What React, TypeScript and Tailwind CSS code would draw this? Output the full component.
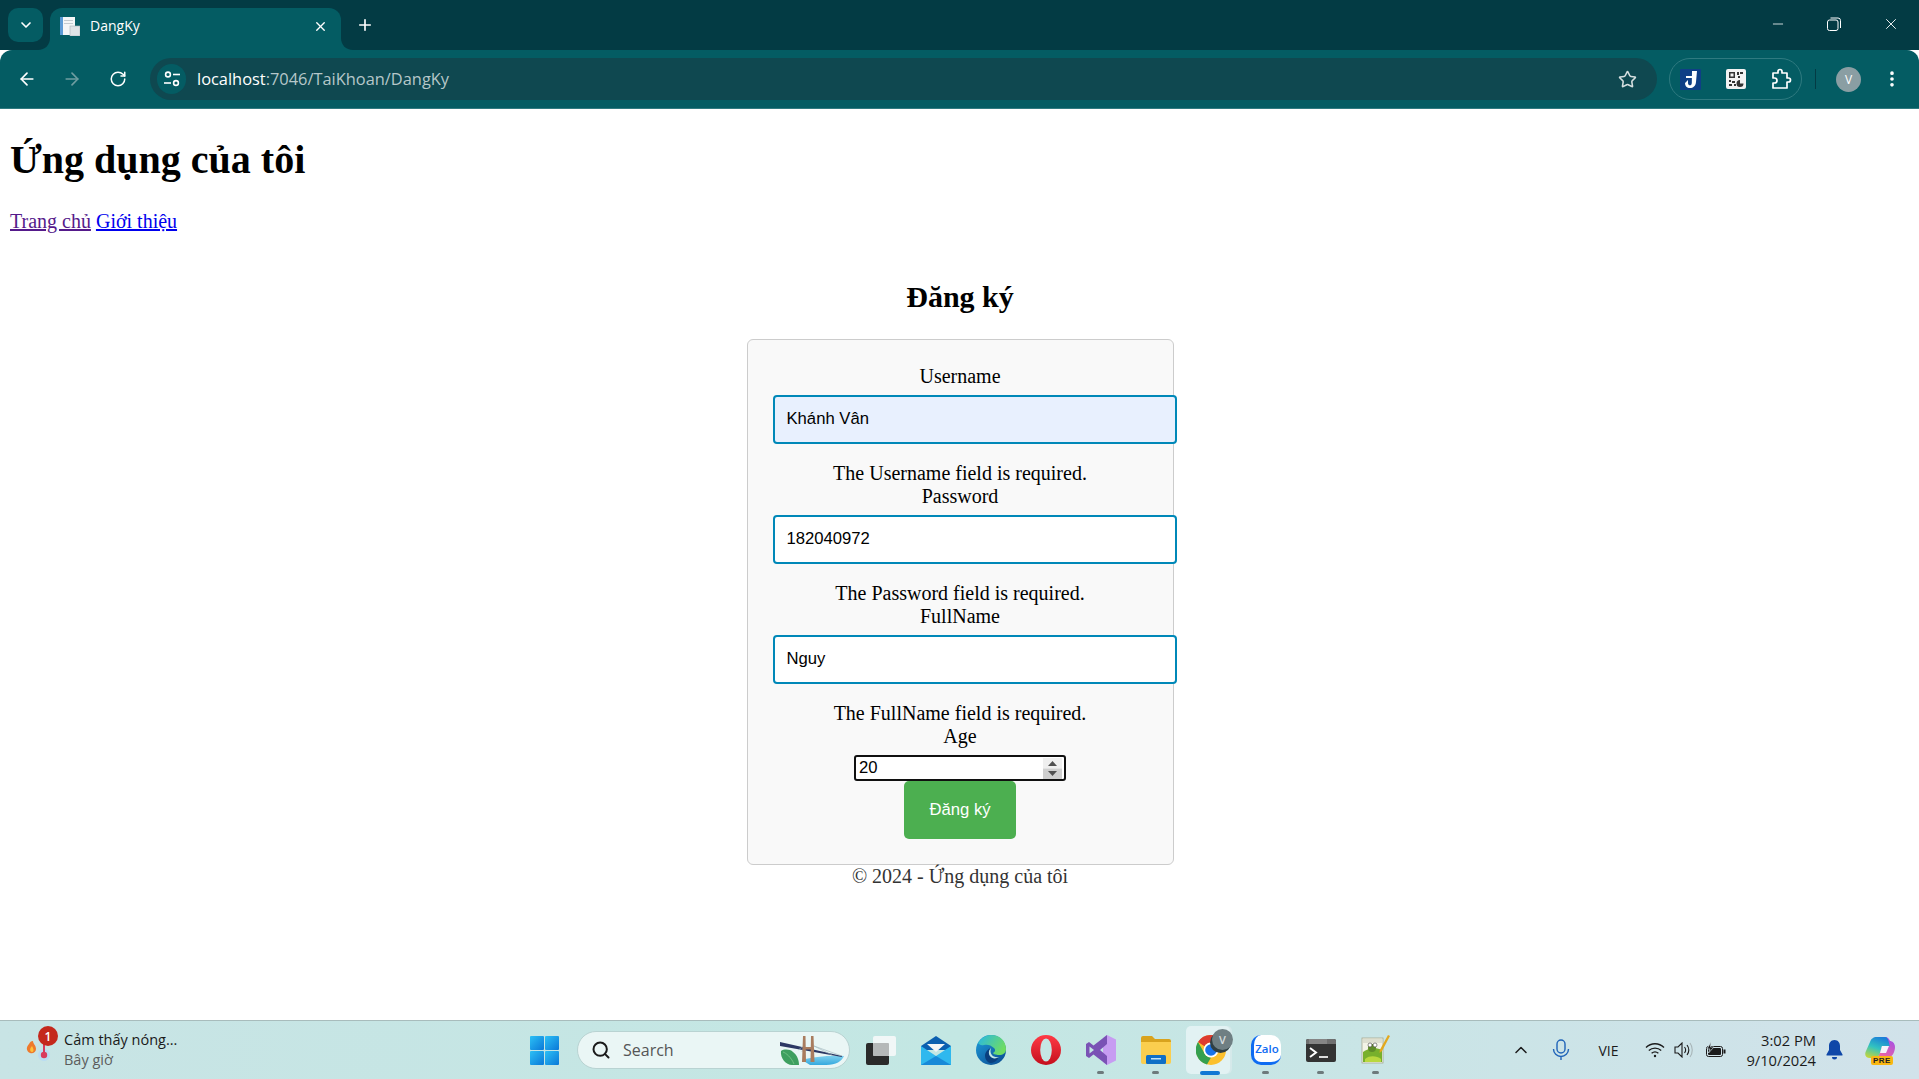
import { ArrowLeft, ArrowRight, ChevronDown, ChevronUp, EllipsisVertical, Minus, Plus, RotateCw, Search, Star, X } from 'lucide-react'

const uiFont = 'font-["Open_Sans","Noto_Sans",sans-serif]'

const SiteInfoIcon = () => (
  <svg width="20" height="20" viewBox="0 0 20 20" fill="none" stroke="#fff" strokeWidth="1.6">
    <circle cx="6" cy="5.5" r="2.4" />
    <path d="M11 5.5h7" />
    <circle cx="14" cy="14" r="2.4" />
    <path d="M2 14h7" />
  </svg>
)

const Favicon = () => (
  <svg width="20" height="19" viewBox="0 0 20 19">
    <rect x="0" y="0" width="15" height="18" fill="#f4f6f7" />
    <rect x="0" y="0" width="3" height="18" fill="#5b9bd5" />
    <rect x="4" y="3" width="9" height="1" fill="#c4cbd0" />
    <rect x="4" y="6" width="9" height="1" fill="#c4cbd0" />
    <rect x="10" y="9" width="10" height="10" fill="#dfe3e6" stroke="#aab3b8" strokeWidth="0.6" />
  </svg>
)

const JIcon = () => (
  <svg width="21" height="21" viewBox="0 0 21 21">
    <rect width="21" height="21" rx="1" fill="#0f3f86" />
    <path d="M12 2h5l-1 11c-.3 4-3 6-6 6-3 0-5-2-5-5l3-3v3c0 1.5 1 2.300 2 2.300s1.700-.8 1.800-2.300z" fill="#fff" />
    <path d="M6 7h6v2H6z" fill="#fff" />
  </svg>
)

const QrIcon = () => (
  <svg width="20" height="20" viewBox="0 0 20 20">
    <rect width="20" height="20" rx="2" fill="#f2f2f2" />
    <path d="M3 3h6v6H3zM4.500 4.500v3h3v-3z" fill="#333" fillRule="evenodd" />
    <path d="M11 3h2v3h-2zM14 3h3v2h-3zM12 7h2v2h-2zM3 11h2v2H3zM6 12h3v2H6zM3 15h3v2H3zM8 15h2v2H8z" fill="#333" />
    <path d="M14 11a3.500 3.500 0 1 0 3.500 3.500H14z" fill="#333" />
  </svg>
)

const PuzzleIcon = () => (
  <svg width="22" height="22" viewBox="0 0 22 22" fill="none" stroke="#fff" strokeWidth="1.700" strokeLinejoin="round">
    <path d="M3 5h5V3.500a2 2 0 0 1 4 0V5h5v5h1.500a2 2 0 0 1 0 4H17v6H3v-5h1.500a2.500 2.500 0 0 0 0-5H3z" />
  </svg>
)

const RestoreIcon = () => (
  <svg width="14" height="14" viewBox="0 0 14 14" fill="none" stroke="#fff" strokeWidth="1">
    <rect x="0.500" y="3" width="10.500" height="10.500" rx="2" />
    <path d="M3.500 1h7.500a2.500 2.500 0 0 1 2.500 2.500V11" />
  </svg>
)

const TabFlare: React.FC<{ side: 'left' | 'right' }> = ({ side }) => (
  <svg
    width="12"
    height="12"
    viewBox="0 0 12 12"
    className={`absolute bottom-0 ${side === 'left' ? '-left-[12px]' : '-right-[12px]'}`}
  >
    <path d={side === 'left' ? 'M12 0v12H0C7 12 12 7 12 0z' : 'M0 0v12h12C5 12 0 7 0 0z'} fill="#045c63" />
  </svg>
)

const WinLogo = () => (
  <svg width="29" height="29" viewBox="0 0 29 29">
    <defs>
      <linearGradient id="winA" x1="0" y1="0" x2="1" y2="1">
        <stop offset="0" stopColor="#2cc0f5" />
        <stop offset="1" stopColor="#0a78d8" />
      </linearGradient>
    </defs>
    <rect x="0" y="0" width="14" height="14" rx="1" fill="url(#winA)" />
    <rect x="15" y="0" width="14" height="14" rx="1" fill="url(#winA)" />
    <rect x="0" y="15" width="14" height="14" rx="1" fill="url(#winA)" />
    <rect x="15" y="15" width="14" height="14" rx="1" fill="url(#winA)" />
  </svg>
)

const BridgeArt = () => (
  <svg width="64" height="32" viewBox="0 0 64 32">
    <defs>
      <linearGradient id="waterA" x1="0" y1="0" x2="0" y2="1">
        <stop offset="0" stopColor="#7fd0ee" />
        <stop offset="1" stopColor="#35a9de" />
      </linearGradient>
    </defs>
    <path d="M22 26c10-3 28-5 42-4-2 5-8 9-18 9H30z" fill="url(#waterA)" />
    <path d="M0 8l62 14v1L0 12z" fill="#2c3763" />
    <path d="M34 12l28 10M34 12l18 9M24 12l-6 4M24 12l-2 6" stroke="#9db3bb" strokeWidth="0.600" fill="none" />
    <path d="M23 2h2.500l.5 26h-4zM31 2h2.500l1 26h-4z" fill="#a97c5e" />
    <path d="M23 13h10v2.500H23z" fill="#a97c5e" />
    <path d="M1 17c3-2 9-2 12 1 4 3 6 8 6 13h-7C6 31 0 24 1 17z" fill="#3f9f60" />
    <path d="M3 18c3 1 8 5 11 12" stroke="#7cc98c" strokeWidth="0.800" fill="none" />
  </svg>
)

const TaskView = () => (
  <svg width="30" height="29" viewBox="0 0 30 29">
    <rect x="0" y="7" width="23" height="22" rx="2" fill="#2a2a2a" />
    <rect x="7" y="0" width="23" height="20" rx="2" fill="#f6f8f8" fillOpacity="0.9" />
    <rect x="7" y="7" width="16" height="13" rx="1" fill="#b5b8b8" />
  </svg>
)

const MailIcon = () => (
  <svg width="30" height="29" viewBox="0 0 30 29">
    <path d="M0 10L15 0l15 10v4H0z" fill="#0b5fb0" />
    <path d="M6 8h18l-9 8z" fill="#f3f5f7" />
    <path d="M0 10l15 10 15-10v19H0z" fill="#2fb8ee" />
    <path d="M0 29l15-9 15 9z" fill="#1789d8" />
  </svg>
)

const EdgeIcon = () => (
  <svg width="30" height="30" viewBox="0 0 30 30">
    <defs>
      <linearGradient id="edgeA" x1="0" y1="0" x2="0.800" y2="1">
        <stop offset="0" stopColor="#1f9fdc" />
        <stop offset="1" stopColor="#0b4f96" />
      </linearGradient>
      <linearGradient id="edgeB" x1="0" y1="0" x2="1" y2="0.500">
        <stop offset="0" stopColor="#27b7e6" />
        <stop offset="1" stopColor="#6fdc63" />
      </linearGradient>
    </defs>
    <circle cx="15" cy="15" r="15" fill="url(#edgeA)" />
    <path d="M2 8C5 3 10 0 15 0c9 0 15 6 15 14 0 4-3 6-7 6-3 0-6-1-6-2 2-1 3-3 1-5-3-3-7-4-10-3-3 .5-4 0-6-2z" fill="url(#edgeB)" />
    <path d="M23 22c-3 2-7 2-9-1-2-3-1-6 1-8-3 1-6 4-6 8 0 3 2 6 5 7 4 0 7-2 9-6z" fill="#0a3f7e" />
    <path d="M15 13c-2 2-3 5-1 8 2 3 6 3 9 1-6 1-10-3-8-9z" fill="#c5e6e4" />
  </svg>
)

const OperaIcon = () => (
  <svg width="30" height="30" viewBox="0 0 30 30">
    <defs>
      <linearGradient id="operaA" x1="0" y1="0" x2="0" y2="1">
        <stop offset="0" stopColor="#ff3a45" />
        <stop offset="1" stopColor="#c40e1d" />
      </linearGradient>
    </defs>
    <circle cx="15" cy="15" r="15" fill="url(#operaA)" />
    <ellipse cx="15" cy="15" rx="5.800" ry="11.500" fill="#c5e6e4" />
  </svg>
)

const VsIcon = () => (
  <svg width="30" height="30" viewBox="0 0 30 30">
    <path d="M21 0l9 4.500v21L21 30l-4-3V3z" fill="#c79cf2" />
    <path d="M21 0v9l-7 6 7 6v9L7.500 19.500 3 23l-3-2V9l3-2 4.500 3.500z" fill="#7a52b5" />
    <path d="M3.500 11.500L8 15l-4.500 3.500z" fill="#c5e6e4" />
  </svg>
)

const FolderIcon = () => (
  <svg width="30" height="28" viewBox="0 0 30 28">
    <path d="M0 2a2 2 0 0 1 2-2h9l3 3h14a2 2 0 0 1 2 2v4H0z" fill="#d9a31d" />
    <path d="M0 6h30v20a2 2 0 0 1-2 2H2a2 2 0 0 1-2-2z" fill="#fbce4e" />
    <rect x="5" y="19" width="20" height="9" rx="1.500" fill="#0f6fc6" />
    <rect x="10" y="22" width="10" height="1.500" fill="#bfe2f7" />
  </svg>
)

const ChromeIcon = () => (
  <svg width="30" height="30" viewBox="0 0 30 30">
    <circle cx="15" cy="15" r="15" fill="#fbc02d" />
    <path d="M15 0a15 15 0 0 1 13 7.500H15a7.500 7.500 0 0 0-6.500 3.750L2 7A15 15 0 0 1 15 0z" fill="#dd3b2f" />
    <path d="M2 7l6.500 11.250A7.500 7.500 0 0 0 15 22.500L11 29.500A15 15 0 0 1 2 7z" fill="#34a04f" />
    <circle cx="15" cy="15" r="7.500" fill="#fff" />
    <circle cx="15" cy="15" r="5.800" fill="#1a73e8" />
  </svg>
)

const ZaloIcon = () => (
  <div className="relative flex h-[30px] w-[30px] items-center justify-center rounded-[10px] border-b-[3px] border-l-[3px] border-[#0f6cf2] bg-white">
    <span className={`text-[11.500px] leading-none font-semibold text-[#0f6cf2] ${uiFont}`}>Zalo</span>
  </div>
)

const TerminalIcon = () => (
  <svg width="30" height="23" viewBox="0 0 30 23">
    <rect width="30" height="23" rx="2" fill="#333333" />
    <path d="M0 2a2 2 0 0 1 2-2h26a2 2 0 0 1 2 2v3H0z" fill="#6f6f6f" />
    <rect x="3" y="0" width="18" height="5" fill="#858585" />
    <path d="M4 9l6 4.500-6 4.500" fill="none" stroke="#fff" strokeWidth="2" />
    <path d="M13 18h9" stroke="#dcdcdc" strokeWidth="2" />
  </svg>
)

const NotepadIcon = () => (
  <svg width="30" height="30" viewBox="0 0 30 30">
    <rect x="1" y="3" width="21" height="25" fill="#f2f3e6" stroke="#a5a88f" strokeWidth="0.800" />
    <path d="M2 7h19M2 5h19" stroke="#9ea28c" strokeWidth="0.500" />
    <path d="M2 17c5-4 13-5 19-2v12H2z" fill="#78b02c" />
    <path d="M4 24c5-4 12-3 16 0v3H4z" fill="#b9d83e" />
    <circle cx="11" cy="13" r="4" fill="#5e8c28" />
    <circle cx="9" cy="10" r="2" fill="#fff" stroke="#444" strokeWidth="0.600" />
    <circle cx="14" cy="10" r="2" fill="#fff" stroke="#444" strokeWidth="0.600" />
    <path d="M27 0l2 1-8 15-2.500 2 .3-3z" fill="#e3a81e" />
  </svg>
)

const CopilotIcon = () => (
  <div className="relative h-[29px] w-[30px]">
    <svg width="30" height="23" viewBox="0 0 30 23">
      <defs>
        <linearGradient id="copA" x1="0.600" y1="0" x2="0.200" y2="1">
          <stop offset="0" stopColor="#1a7fd8" />
          <stop offset="0.500" stopColor="#32c3c0" />
          <stop offset="1" stopColor="#c4d63a" />
        </linearGradient>
        <linearGradient id="copB" x1="0.700" y1="0" x2="0.200" y2="1">
          <stop offset="0" stopColor="#a24fe8" />
          <stop offset="1" stopColor="#f5689a" />
        </linearGradient>
      </defs>
      <path d="M20 1c3 0 4 2 5 4 2 0 5 2 5 6 0 5-3 11-8 11H11c2-1 3-3 4-6l3-9c.5-2 1-4 2-6z" fill="url(#copB)" />
      <path d="M20 1H12C8 1 6 3 5 6l-4 9c-2 4 0 7 4 7h5c2 0 4-2 5-5l2-7h8c-1-1-1-9-5-9z" fill="url(#copA)" />
      <path d="M17 10h7l-3 7h-6z" fill="#f4f4fa" />
    </svg>
    <div className="absolute bottom-0 left-[6px] rounded-[2px] bg-[#f9b712] px-[2px] font-['Liberation_Sans',sans-serif] text-[8px] leading-[9px] font-bold tracking-[0.5px] text-[#222]">
      PRE
    </div>
  </div>
)

const WeatherIcon = () => (
  <svg width="24" height="38" viewBox="0 0 24 38">
    <path d="M3 13c-3 3-3 7 1 9 3 1 6-1 6-4 0-4-3-5-3-8-2 0-3 1-4 3z" fill="#ee7a2c" />
    <path d="M4.500 17c-1 2 0 4 1.500 4s2-2 1-4l-1-2z" fill="#ffc13a" />
    <circle cx="18" cy="24" r="6" fill="#b9dcf3" />
    <path d="M18 6v16" stroke="#d93a5e" strokeWidth="2" />
    <circle cx="18" cy="24" r="3.200" fill="#d93a5e" />
  </svg>
)

const MicIcon = () => (
  <svg width="18" height="22" viewBox="0 0 18 22" fill="none" stroke="#1f63b8" strokeWidth="1.400">
    <rect x="5" y="1" width="8" height="13" rx="4" />
    <path d="M1.500 10a7.500 7.500 0 0 0 15 0M9 17.500V21" />
  </svg>
)

const WifiIcon = () => (
  <svg width="20" height="16" viewBox="0 0 20 16" fill="none" stroke="#1b1b1b" strokeWidth="1.300">
    <path d="M1 5.500c5-5 13-5 18 0M3.800 8.500c3.500-3.200 9-3.200 12.400 0M6.600 11.300c2-1.700 4.800-1.700 6.800 0" />
    <circle cx="10" cy="14" r="1.200" fill="#1b1b1b" stroke="none" />
  </svg>
)

const SpeakerIcon = () => (
  <svg width="21" height="16" viewBox="0 0 21 16" fill="none" stroke="#1b1b1b" strokeWidth="1.100">
    <path d="M1 5h3l4-4v14l-4-4H1z" />
    <path d="M10.500 5c1.300 1.700 1.300 4.300 0 6M13 3c2.200 3 2.200 7 0 10" />
    <path d="M16 1c3 4 3 10 0 14" stroke="#a8b5b8" />
  </svg>
)

const BatteryIcon = () => (
  <svg width="21" height="17" viewBox="0 0 21 17">
    <rect x="1.500" y="4.500" width="16" height="10" rx="2" fill="#d1e2e8" stroke="#1b1b1b" />
    <rect x="3" y="6" width="13" height="7" rx="1" fill="#1b1b1b" />
    <rect x="18.500" y="7.500" width="2" height="4" fill="#1b1b1b" />
    <path d="M6 0L2 7h3L3.500 11 9 5H5.500z" fill="#1b1b1b" stroke="#d1e2e8" strokeWidth="0.700" />
  </svg>
)

const BellIcon = () => (
  <svg width="17" height="20" viewBox="0 0 17 20" fill="#0f47a8">
    <path d="M8.500 0C4.800 0 3 3 3 6v4L.5 14.500c-.2.500 0 1 .5 1h15c.5 0 .700-.5.500-1L14 10V6c0-3-1.800-6-5.500-6z" />
    <path d="M6 17h5a2.500 2.500 0 0 1-5 0z" />
  </svg>
)

const SpinArrows = () => (
  <svg width="19" height="21" viewBox="0 0 19 21">
    <rect width="19" height="10.500" fill="#efefef" />
    <rect y="10.500" width="19" height="10.500" fill="#cfcfcf" />
    <path d="M9.500 3l4.500 5H5z" fill="#505050" />
    <path d="M9.500 18l4.500-5H5z" fill="#505050" />
  </svg>
)

const taskItems = [
  { id: 'taskview', icon: <TaskView />, mark: false },
  { id: 'mail', icon: <MailIcon />, mark: false },
  { id: 'edge', icon: <EdgeIcon />, mark: false },
  { id: 'opera', icon: <OperaIcon />, mark: false },
  { id: 'vs', icon: <VsIcon />, mark: true },
  { id: 'folder', icon: <FolderIcon />, mark: true },
]

const taskItemsAfter = [
  { id: 'zalo', icon: <ZaloIcon />, mark: true },
  { id: 'terminal', icon: <TerminalIcon />, mark: true },
  { id: 'notepad', icon: <NotepadIcon />, mark: true },
]

const TaskButton: React.FC<{ icon: React.ReactNode; mark: boolean }> = ({ icon, mark }) => (
  <div className="relative flex h-[58px] w-[55px] items-center justify-center">
    {icon}
    {mark && <div className="absolute bottom-[5px] h-[3px] w-[7px] rounded-full bg-[#6d7a7c]" />}
  </div>
)

const Field: React.FC<{ label: string; value: string; error: string; filled?: boolean }> = ({ label, value, error, filled }) => (
  <>
    <div className="h-[23px]">{label}</div>
    <input
      readOnly
      value={value}
      className={`mt-[7px] block h-[49px] w-[404px] rounded-[4px] border-[2.5px] border-[#0088b8] px-[12px] pb-[1px] font-['Liberation_Sans',sans-serif] text-[16.67px] text-black outline-none ${filled ? 'bg-[#e8f0fe]' : 'bg-white'}`}
    />
    <div className="mt-[18px] h-[23px]">{error}</div>
  </>
)

const App = () => {
  return (
    <div className="flex h-[1079px] w-full flex-col overflow-hidden bg-white font-['Liberation_Serif',serif] text-[20px] leading-[23px] text-black">
      {/* browser tabs */}
      <div className={`flex h-[50px] shrink-0 items-end bg-[#033b44] pl-[8px] ${uiFont}`}>
        <div className="mb-[8px] flex h-[34px] w-[35px] items-center justify-center rounded-[10px] bg-[#045c63]">
          <ChevronDown size={16} color="#fff" strokeWidth={2.5} />
        </div>
        <div className="relative ml-[7px] flex h-[42px] w-[291px] items-center rounded-t-[12px] bg-[#045c63] pb-[6px] pl-[10px] pr-[13px]">
          <TabFlare side="left" />
          <Favicon />
          <span className="ml-[10px] text-[14px] leading-none text-white">DangKy</span>
          <X className="ml-auto" size={15} color="#fff" strokeWidth={2.2} />
          <TabFlare side="right" />
        </div>
        <div className="mb-[9px] ml-[15px] flex h-[32px] w-[18px] items-center justify-center">
          <Plus size={18} color="#fff" strokeWidth={2.2} />
        </div>
        <div className="mb-[17px] ml-auto flex items-center pr-[19px]">
          <Minus size={16} color="#fff" strokeWidth={1.2} />
          <div className="ml-[41px]">
            <RestoreIcon />
          </div>
          <X className="ml-[41px]" size={18} color="#fff" strokeWidth={1.2} />
        </div>
      </div>

      {/* browser toolbar */}
      <div className={`flex h-[59px] shrink-0 items-center rounded-t-[12px] border-b border-[#2f7a80] bg-[#045c63] pl-[17px] pr-[17px] ${uiFont}`}>
        <ArrowLeft size={20} color="#fff" strokeWidth={2} />
        <ArrowRight className="ml-[25px]" size={20} color="#6f9da1" strokeWidth={2} />
        <RotateCw className="ml-[27px]" size={18} color="#fff" strokeWidth={2} />
        <div className="ml-[23px] flex h-[42px] w-[1507px] items-center rounded-full bg-[#0f4850] pl-[7px] pr-[20px]">
          <div className="flex h-[30px] w-[29px] items-center justify-center rounded-full bg-[#045c63]">
            <SiteInfoIcon />
          </div>
          <span className="ml-[11px] text-[16.400px] leading-none text-[#b5c7c9]">
            <span className="text-white">localhost</span>:7046/TaiKhoan/DangKy
          </span>
          <Star className="ml-auto" size={19} color="#d5dedf" strokeWidth={2} />
        </div>
        <div className="ml-[12px] flex h-[42px] w-[133px] items-center justify-between rounded-full border border-[#2f7a80] pl-[10px] pr-[9px]">
          <JIcon />
          <QrIcon />
          <PuzzleIcon />
        </div>
        <div className="ml-[13px] h-[20px] w-px bg-[#033b44]" />
        <div className="ml-[20px] flex h-[25px] w-[25px] items-center justify-center rounded-full bg-[#8a9ea3] text-[12px] text-white">V</div>
        <EllipsisVertical className="ml-[21px]" size={20} color="#fff" strokeWidth={2.4} />
      </div>

      {/* page */}
      <div className="min-h-0 flex-1 px-[10px]">
        <h1 className="mt-[28px] text-[40px] leading-[46px] font-bold">Ứng dụng của tôi</h1>
        <p className="mt-[27px] h-[23px]">
          <a href="#home" className="text-[#551a8b] underline">Trang chủ</a>{' '}
          <a href="#about" className="text-[#0000ee] underline">Giới thiệu</a>
        </p>
        <div className="pl-px text-center">
          <h2 className="mt-[47px] text-[30px] leading-[34px] font-bold">Đăng ký</h2>
          <div className="mx-auto mt-[25px] h-[526px] w-[427px] rounded-[6px] border border-[#cccccc] bg-[#f9f9f9] px-[25px] pt-[25px]">
            <Field label="Username" value="Khánh Vân" error="The Username field is required." filled />
            <Field label="Password" value="182040972" error="The Password field is required." />
            <Field label="FullName" value="Nguy" error="The FullName field is required." />
            <div className="h-[23px]">Age</div>
            <div className="relative mx-auto mt-[7px] h-[26px] w-[212px]">
              <input
                readOnly
                value="20"
                className="block h-[26px] w-[212px] rounded-[3px] border-[2.5px] border-[#101010] bg-white px-[3px] font-['Liberation_Sans',sans-serif] text-[16.67px] text-black outline-none"
              />
              <div className="absolute top-[3px] right-[4px] h-[21px] w-[19px]">
                <SpinArrows />
              </div>
            </div>
            <button className="mx-auto block h-[58px] w-[112px] rounded-[5px] bg-[#4caf50] pb-[2px] font-['Liberation_Sans',sans-serif] text-[16.67px] text-white">
              Đăng ký
            </button>
          </div>
          <div className="text-[#333333]">© 2024 - Ứng dụng của tôi</div>
        </div>
      </div>

      {/* taskbar */}
      <div className={`flex h-[59px] shrink-0 items-center border-t border-[#a8bcbc] bg-gradient-to-r from-[#c8e4e5] via-[#c3e7e3] to-[#d1e2ea] ${uiFont}`}>
        <div className="flex w-[530px] shrink-0 items-center pl-[26px]">
          <div className="relative h-[38px] w-[24px]">
            <WeatherIcon />
            <div className="absolute -top-[5px] left-[12px] flex h-[20px] w-[20px] items-center justify-center rounded-full bg-[#c4281c] text-[12px] font-semibold text-white">1</div>
          </div>
          <div className="ml-[14px] text-[14.500px] leading-[20px]">
            <div className="text-[#1a1a1a]">Cảm thấy nóng...</div>
            <div className="text-[#5c5c5c]">Bây giờ</div>
          </div>
        </div>
        <WinLogo />
        <div className="ml-[18px] flex h-[38px] w-[273px] items-center rounded-full border border-[#b9d3d2] bg-[#eaf6f5] pl-[13px] pr-[5px]">
          <Search size={20} color="#1a1a1a" strokeWidth={2.4} />
          <span className="ml-[12px] text-[16px] leading-none text-[#555]">Search</span>
          <div className="ml-auto">
            <BridgeArt />
          </div>
        </div>
        <div className="ml-[3px] flex items-center">
          {taskItems.map((item) => (
            <TaskButton key={item.id} icon={item.icon} mark={item.mark} />
          ))}
          <div className="relative flex h-[58px] w-[55px] items-center justify-center">
            <div className="absolute top-[5px] left-[3px] h-[48px] w-[44px] rounded-[5px] bg-[#e2f2f3] shadow-[2px_0_0_#d5e9ea]" />
            <div className="relative">
              <ChromeIcon />
            </div>
            <div className="absolute top-[8px] left-[29px] flex h-[21px] w-[21px] items-center justify-center rounded-full bg-[#6f7f83] text-[11px] font-semibold text-[#d5dcde] shadow-[-2px_3px_0_#2f3f43]">V</div>
            <div className="absolute bottom-[4px] left-[17px] h-[4px] w-[20px] rounded-full bg-[#0f78d4]" />
          </div>
          {taskItemsAfter.map((item) => (
            <TaskButton key={item.id} icon={item.icon} mark={item.mark} />
          ))}
        </div>
        <div className="ml-auto flex items-center pr-[24px]">
          <ChevronUp size={20} color="#1b1b1b" strokeWidth={1.8} />
          <div className="ml-[21px]">
            <MicIcon />
          </div>
          <span className="ml-[28px] text-[14px] text-[#1b1b1b]">VIE</span>
          <div className="ml-[27px]">
            <WifiIcon />
          </div>
          <div className="ml-[9px]">
            <SpeakerIcon />
          </div>
          <div className="ml-[10px]">
            <BatteryIcon />
          </div>
          <div className="ml-[20px] text-right text-[14.700px] leading-[20px] text-[#1b1b1b]">
            <div>3:02 PM</div>
            <div>9/10/2024</div>
          </div>
          <div className="ml-[10px]">
            <BellIcon />
          </div>
          <div className="ml-[22px]">
            <CopilotIcon />
          </div>
        </div>
      </div>
    </div>
  )
}

export default App
